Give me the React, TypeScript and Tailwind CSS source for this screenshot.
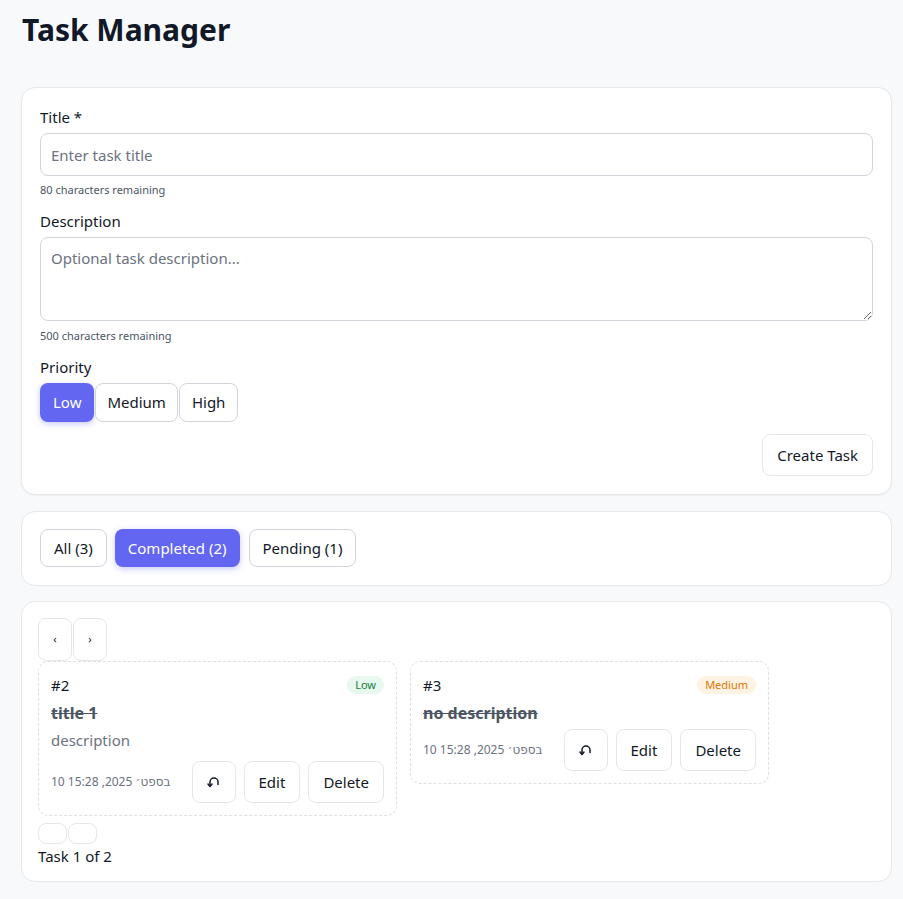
import React from "react";

const font = { fontFamily: '"Noto Sans", "DejaVu Sans", sans-serif' };

function UndoIcon() {
  return (
    <svg width="14" height="14" viewBox="0 0 14 14" fill="none" stroke="#111827" strokeWidth="1.5" strokeLinecap="round" strokeLinejoin="round">
      <path d="M11 9.5 V7 A4 4 0 0 0 3 7 V11" />
      <polyline points="1,9 3,11.5 5,9" />
    </svg>
  );
}

function TaskCard({
  id,
  title,
  desc,
  badge,
  badgeCls,
}: {
  id: number;
  title: string;
  desc?: string;
  badge: string;
  badgeCls: string;
}) {
  return (
    <div className="w-[359px] rounded-[10px] border border-dashed border-[#dcdfe4] bg-white px-3 pt-[13px] pb-3">
      <div className="flex h-[20px] items-center justify-between">
        <span className="text-[15px] leading-[20px] text-[#111827]">#{id}</span>
        <span className={"rounded-full px-2 text-[11px] leading-[18px] " + badgeCls}>{badge}</span>
      </div>
      <div className="mt-[7px] text-[16px] font-bold leading-[22px] text-[#4b5563] line-through">{title}</div>
      {desc && <div className="mt-[5px] mb-[10px] text-[15px] leading-[22px] text-[#6b7280]">{desc}</div>}
      <div className="mt-[5px] flex items-center justify-between">
        <span className="text-[12px] text-[#6b7280]">10 בספט׳ 2025, 15:28</span>
        <div className="flex gap-2">
          <button className="flex h-[42px] w-[44px] items-center justify-center rounded-lg border border-[#e5e7eb] bg-white">
            <UndoIcon />
          </button>
          <button className="h-[42px] rounded-lg border border-[#e5e7eb] bg-white px-[14px] text-[15px] text-[#111827]">Edit</button>
          <button className="h-[42px] rounded-lg border border-[#e5e7eb] bg-white px-[14px] text-[15px] text-[#111827]">Delete</button>
        </div>
      </div>
    </div>
  );
}

export default function App() {
  return (
    <div className="min-h-[899px] bg-[#f8f9fb] pl-[21px] pr-[11px] pt-[10px] pb-4" style={font}>
      <h1 className="pl-[1px] text-[30px] font-bold leading-[40px] text-[#111827]">Task Manager</h1>
      <div className="mt-[37px] rounded-[14px] border border-[#e5e7eb] bg-white px-[18px] pt-[19px] pb-[18px] shadow-[0_1px_2px_rgba(0,0,0,0.04)]">
        <label className="block text-[15px] leading-[20px] text-[#111827]">Title *</label>
        <input
          className="mt-[6px] block h-[43px] w-full rounded-lg border border-[#d1d5db] px-[10px] text-[15px] placeholder:text-[#6b7280] outline-none"
          placeholder="Enter task title"
        />
        <div className="mt-[6px] text-[11px] leading-[16px] text-[#4b5563]">80 characters remaining</div>
        <label className="mt-[13px] block text-[15px] leading-[20px] text-[#111827]">Description</label>
        <textarea
          className="mt-[6px] block h-[84px] w-full rounded-lg border border-[#d1d5db] px-[10px] py-[9px] text-[15px] placeholder:text-[#6b7280] outline-none"
          placeholder="Optional task description..."
        />
        <div className="mt-[7px] text-[11px] leading-[16px] text-[#4b5563]">500 characters remaining</div>
        <label className="mt-[13px] block text-[15px] leading-[20px] text-[#111827]">Priority</label>
        <div className="mt-[6px] flex gap-[1px]">
          <button className="h-[39px] rounded-lg bg-[#6366f1] px-[13px] text-[15px] text-white shadow-[0_2px_6px_rgba(99,102,241,0.35)]">Low</button>
          <button className="h-[39px] rounded-lg border border-[#d1d5db] bg-white px-[11px] text-[15px] text-[#111827]">Medium</button>
          <button className="h-[39px] rounded-lg border border-[#d1d5db] bg-white px-[12px] text-[15px] text-[#111827]">High</button>
        </div>
        <div className="mt-3 flex justify-end">
          <button className="h-[42px] rounded-lg border border-[#e5e7eb] bg-white px-[14px] text-[15px] text-[#111827]">Create Task</button>
        </div>
      </div>

      <div className="mt-4 rounded-[14px] border border-[#e5e7eb] bg-white px-[18px] pt-[17px] pb-[18px]">
        <div className="flex gap-[8px]">
          <button className="h-[38px] rounded-lg border border-[#d1d5db] bg-white px-[13px] text-[15px] text-[#111827]">All (3)</button>
          <button className="h-[38px] rounded-lg bg-[#6366f1] px-[13px] text-[15px] text-white shadow-[0_2px_6px_rgba(99,102,241,0.35)]">Completed (2)</button>
          <button className="ml-[1px] h-[38px] rounded-lg border border-[#d1d5db] bg-white px-[13px] text-[15px] text-[#111827]">Pending (1)</button>
        </div>
      </div>

      <div className="mt-[15px] rounded-[14px] border border-[#e5e7eb] bg-white px-4 pt-4 pb-[14px]">
        <div className="flex gap-[1px]">
          <button className="h-[43px] w-[34px] rounded-lg border border-[#e5e7eb] bg-white text-[11px] text-[#111827]">‹</button>
          <button className="h-[43px] w-[34px] rounded-lg border border-[#e5e7eb] bg-white text-[11px] text-[#111827]">›</button>
        </div>
        <div className="flex items-start gap-[13px]">
          <TaskCard id={2} title="title 1" desc="description" badge="Low" badgeCls="bg-[#e7f8ef] text-[#15803d]" />
          <TaskCard id={3} title="no description" badge="Medium" badgeCls="bg-[#fef3e2] text-[#d97706]" />
        </div>
        <div className="mt-[7px] flex gap-[1px]">
          <button className="h-[21px] w-[29px] rounded-lg border border-[#e5e7eb] bg-white"></button>
          <button className="h-[21px] w-[29px] rounded-lg border border-[#e5e7eb] bg-white"></button>
        </div>
        <div className="mt-[1px] text-[15px] leading-[22px] text-[#111827]">Task 1 of 2</div>
      </div>
    </div>
  );
}
